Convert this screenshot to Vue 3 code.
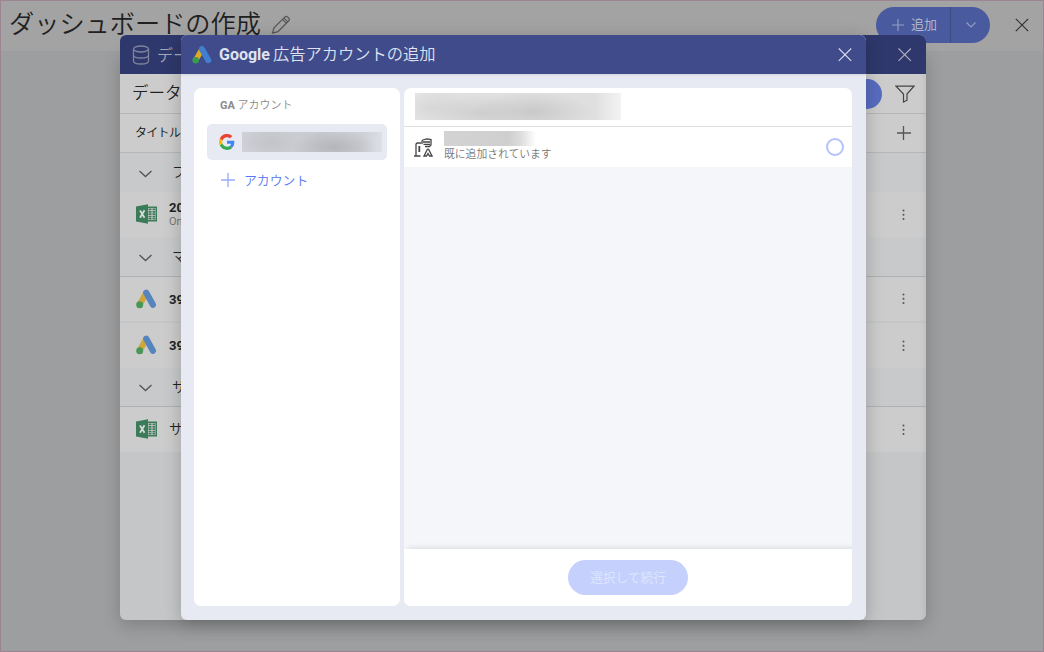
<script setup>
const rows = [
  { kind: 'group', label: 'フ', h: 39 },
  { kind: 'item', icon: 'excel', label: '20', sub: 'On', h: 45, bold: true },
  { kind: 'group', label: 'マ', h: 40, line: true },
  { kind: 'item', icon: 'ads', label: '39', h: 46, bold: true, soft: true },
  { kind: 'item', icon: 'ads', label: '39', h: 45, bold: true },
  { kind: 'group', label: 'サ', h: 39, line: true },
  { kind: 'item', icon: 'excel', label: 'サ', h: 45 },
]
</script>

<template>
  <div class="page">
    <header class="topbar">
      <h1>ダッシュボードの作成</h1>
      <svg class="pencil" width="20" height="20" viewBox="0 0 20 20"><path d="M1.500 18.200 3 12.800 13.700 2.100c1-1 2-1 3 0l.9.9c1 1 1 2 0 3L6.900 16.700 1.500 18.200ZM11.500 4.300l4 4M12.900 2.900l4 4" /></svg>
      <div class="add">
        <span class="add-main"><svg width="12" height="12" viewBox="0 0 12 12"><path d="M6 0v12M0 6h12" /></svg><span class="add-label">追加</span></span>
        <span class="add-more"><svg width="12" height="8" viewBox="0 0 12 8"><path d="m1.500 1.500 4.500 4.500 4.500-4.500" /></svg></span>
      </div>
      <svg class="page-close" width="14" height="14" viewBox="0 0 14 14"><path d="m.8.8 12.400 12.400M13.200.8.8 13.200" /></svg>
    </header>

    <section class="sources">
      <div class="sources-head">
        <svg width="18" height="20" viewBox="0 0 18 20" class="db"><ellipse cx="9" cy="4" rx="7.500" ry="3" /><path d="M1.500 4v12c0 4 15 4 15 0V4M1.500 10c0 4 15 4 15 0" /></svg>
        <span class="head-label">デー</span>
        <svg class="x" width="14" height="14" viewBox="0 0 14 14"><path d="m.5.5 12.400 12.400M12.900.5.5 12.900" /></svg>
      </div>
      <div class="bar"><span class="bar-title">データ</span><i class="pill"></i>
        <svg class="funnel" width="20" height="18" viewBox="0 0 20 18"><path d="M1 1.200h18L12 9v6.200L8.500 17V9Z" /></svg>
      </div>
      <div class="bar columns"><span class="col-title">タイトル</span>
        <svg class="plus" width="14" height="14" viewBox="0 0 14 14"><path d="M6.500 0v14M0 7h14" /></svg>
      </div>
      <div v-for="(r, i) in rows" :key="i" class="row" :class="[r.kind, { line: r.line, soft: r.soft }]" :style="{ height: r.h + 'px' }">
        <template v-if="r.kind === 'group'">
          <svg class="chev" width="14" height="8" viewBox="0 0 14 8"><path d="m1.500 1 6 5.500 6-5.500" /></svg>
          <span class="group-label">{{ r.label }}</span>
        </template>
        <template v-else>
          <svg v-if="r.icon === 'excel'" class="icon" width="21" height="20" viewBox="0 0 21 20">
            <path fill="#3c7b5a" d="M0 2.500 12 .3v19.400L0 17.500Z" /><path fill="#3c7b5a" d="M12 2.500h9v15h-9Z" />
            <path fill="#ccc" d="M12 4h7.500v12H12Z" />
            <path fill="#3c7b5a" d="M12.500 4.500h3v1.800h-3zm4 0h2.500v1.800h-2.500zm-4 2.400h3v1.800h-3zm4 0h2.500v1.800h-2.500zm-4 2.400h3v1.800h-3zm4 0h2.500v1.800h-2.500zm-4 2.400h3v1.800h-3zm4 0h2.500v1.800h-2.500zm-4 2.400h3v1.500h-3zm4 0h2.500v1.500h-2.500z" />
            <path stroke="#dcdcdc" stroke-width="1.700" fill="none" d="m4 6.500 4.500 7.200M8.500 6.300 4 13.700" />
          </svg>
          <svg v-else class="icon" width="21" height="20" viewBox="0 0 21 20">
            <path d="M10.200 4 4 15" stroke="#cda73a" stroke-width="6" stroke-linecap="round" /><path d="m10.300 3.700 6.600 12" stroke="#5684bd" stroke-width="6.200" stroke-linecap="round" /><circle cx="3.700" cy="15.700" r="3.500" fill="#499757" />
          </svg>
          <span class="names"><b v-if="r.bold">{{ r.label }}</b><span v-else class="plain">{{ r.label }}</span><small v-if="r.sub">{{ r.sub }}</small></span>
          <svg class="dots" width="3" height="12" viewBox="0 0 3 12"><circle cx="1.500" cy="1.500" r="1" /><circle cx="1.500" cy="5.700" r="1" /><circle cx="1.500" cy="10" r="1" /></svg>
        </template>
      </div>
    </section>

    <section class="dialog">
      <div class="dialog-head">
        <svg width="20" height="18" viewBox="0 0 20 18"><path d="M9.800 3.500 3.800 14" stroke="#e0aa20" stroke-width="5.500" stroke-linecap="round" /><path d="m10 3.200 6.300 11" stroke="#417fce" stroke-width="6" stroke-linecap="round" /><circle cx="3.700" cy="14.300" r="3.300" fill="#399b50" /></svg>
        <h2><b>Google</b><span>広告アカウントの追加</span></h2>
        <svg class="x" width="14" height="14" viewBox="0 0 14 14"><path d="m.8.5 12.400 12.400M13.200.5.8 12.900" /></svg>
      </div>
      <div class="dialog-body">
        <aside class="accounts">
          <div class="accounts-title"><b>GA</b> アカウント</div>
          <div class="account">
            <svg width="16" height="16" viewBox="0 0 48 48"><path fill="#4285f4" d="M46 24.500c0-1.600-.1-3.100-.4-4.500H24v9h12.400c-.6 3-2.200 5.300-4.600 6.900l7.300 5.700C43.400 37.700 46 31.800 46 24.500Z" /><path fill="#fbbc05" d="M10.500 28.600a14 14 0 0 1 0-9.200L2.600 13.200a24 24 0 0 0 0 21.600Z" /><path fill="#ea4335" d="M24 9.500c3.500 0 6.700 1.200 9.200 3.600l6.900-6.900A23.500 23.500 0 0 0 2.600 13.200l7.900 6.200C12.400 13.700 17.700 9.500 24 9.500Z" /><path fill="#34a853" d="M24 48c6.500 0 11.900-2.100 15.900-5.800l-7.700-6c-6.100 4.300-18 2.200-21.700-7.600l-7.900 6.200C6.500 42.600 14.600 48 24 48Z" /></svg>
            <i class="mask mask-account"></i>
          </div>
          <div class="new-account"><svg width="14" height="14" viewBox="0 0 14 14"><path d="M7 0v14M0 7h14" /></svg><span>アカウント</span></div>
        </aside>
        <main class="panel">
          <div class="panel-head"><i class="mask mask-title"></i></div>
          <div class="entry">
            <svg class="building" width="19" height="20" viewBox="0 0 19 20">
              <path d="M0 18h6.500M2 18V6.500c0-1 .5-1.500 1.500-1.500H7M8 6V3c0-.5.300-.8.800-1l4-1.200 4.200.7V7l-1.500 1.500H11" /><path stroke-width="1.800" d="M5.300 8v6" /><path d="M9 4h7M9.500 6.300H16M10 18l3.300-6.500c.3-.6 1.100-.6 1.400 0L18 18h-2.500L14 15.500 12.500 18Z" />
            </svg>
            <div class="entry-text"><i class="mask mask-name"></i><span>既に追加されています</span></div>
            <i class="radio"></i>
          </div>
          <div class="space"></div>
          <footer><span class="submit">選択して続行</span></footer>
        </main>
      </div>
    </section>
    <i class="frame"></i>
  </div>
</template>

<style>
body { margin: 0; overflow: hidden; }
</style>
<style scoped>
* { box-sizing: border-box; }
.page { position: relative; width: 1044px; height: 652px; overflow: hidden; background: #9d9e9f; font-family: Roboto, "Noto Sans CJK JP", sans-serif; font-weight: 350; }
svg { fill: none; flex: none; }
.frame { position: absolute; inset: 0; border: 1px solid #9c8593; }
.topbar { display: flex; height: 51px; background: #a3a3a3; padding-left: 9px; align-items: flex-start; }
h1 { margin: 0; font-size: 25.200px; line-height: 49px; font-weight: 350; color: #202020; white-space: nowrap; width: 262px; }
.pencil { margin-top: 15px; stroke: #555; stroke-width: 1.200; }
.add { display: flex; margin: 7px 0 0 585px; width: 114px; height: 36px; border-radius: 18px; background: #495a9e; color: #b9bfd1; font-size: 13px; overflow: hidden; }
.add-main { width: 75px; display: flex; align-items: center; padding-left: 16px; gap: 7px; border-right: 1px solid #3d4b84; }
.add-label { padding-bottom: 3px; }
.add-more { flex: 1; display: grid; place-items: center; }
.add svg { stroke: #939dc2; stroke-width: 1.200; }
.page-close { margin: 18px 0 0 25px; stroke: #303030; stroke-width: 1.200; }
.sources { position: absolute; left: 120px; top: 35px; width: 806px; height: 585px; background: #c5c6c8; border-radius: 6px; overflow: hidden; z-index: 1; }
.sources::after { content: ''; position: absolute; inset: 39px 0 0; box-shadow: inset -7px 0 6px -6px rgba(0, 0, 0, .08); }
.page::before { content: ''; position: absolute; left: 120px; top: 50px; width: 806px; height: 570px; border-radius: 6px; box-shadow: 0 5px 18px rgba(0, 0, 0, .2); }
.sources-head { height: 39px; background: #2f386c; display: flex; align-items: center; color: #a5a9bd; padding: 0 14px 0 12px; font-size: 16px; }
.head-label { padding-bottom: 2px; margin-left: -1px; }
.db { stroke: #7f849c; stroke-width: 1.300; margin-right: 8px; }
.x { margin-left: auto; stroke: #d5d8e7; stroke-width: 1.200; }
.sources-head .x { stroke: #a8abbd; }
.bar { height: 40px; border-bottom: 1px solid #b7b7b7; background: #ccc; display: flex; align-items: center; padding-left: 12px; }
.bar-title { font-size: 16.500px; color: #222; padding-bottom: 3px; }
.columns { height: 39px; padding: 0 15px; }
.col-title { font-size: 12px; color: #111; letter-spacing: -.7px; padding-bottom: 3px; }
.pill { width: 130px; height: 30px; border-radius: 15px; background: #586cbf; margin-left: auto; }
.funnel { margin: 0 11px 0 13px; stroke: #444; stroke-width: 1.200; }
.plus { stroke: #555; stroke-width: 1.300; margin-left: auto; }
.row { display: flex; align-items: center; padding-left: 16px; background: #ccc; }
.group { background: #c8c9cb; padding-left: 18px; }
.line { border-bottom: 1px solid #b0b1b3; }
.soft { border-bottom: 2px solid #c5c6c8; }
.icon { margin-top: -1px; }
.chev { stroke: #555; stroke-width: 1.300; margin-top: 2px; }
.group-label { font-size: 14px; margin-left: 20px; color: #222; padding-bottom: 3px; }
.names { display: flex; flex-direction: column; margin-left: 12px; color: #222; font-size: 13px; line-height: 15px; }
.names b { font-weight: 700; }
.names .plain { font-size: 14px; padding-bottom: 1px; }
.names small { font-size: 11px; line-height: 14px; color: #777; font-weight: 400; }
.dots { margin: 0 21px 0 auto; fill: #555; }
.dialog { position: absolute; left: 181px; top: 35px; width: 685px; height: 585px; background: #e7eaf2; border-radius: 6px; overflow: hidden; display: flex; flex-direction: column; z-index: 2; box-shadow: 0 4px 18px rgba(0, 0, 0, .22); }
.dialog-head { height: 39px; flex: none; background: #404b8b; box-shadow: 0 1px 2px rgba(0, 0, 0, .1); display: flex; align-items: center; padding: 0 14px 0 11px; }
h2 { display: flex; gap: 3px; margin: 0 0 0 7px; font-size: 16.250px; font-weight: 350; color: #dfe2ef; white-space: nowrap; line-height: 39px; }
h2 b { font-size: 16px; font-weight: 700; }
.dialog-body { flex: 1; display: flex; gap: 4px; padding: 14px 14px 14px 13px; }
.accounts { width: 206px; background: #fff; border-radius: 7px; }
.accounts-title { font-size: 11px; color: #8b8b8b; line-height: 36px; height: 36px; padding-left: 26px; }
.accounts-title b { font-size: 11px; font-weight: 700; }
.account { margin: 0 13px; height: 36px; border-radius: 5px; background: #e7eaf2; display: flex; align-items: center; padding-left: 12px; gap: 7px; }
.mask { display: block; }
.mask-account { width: 140px; height: 20px; background: radial-gradient(ellipse 30px 16px at 20% 50%, rgba(190, 191, 195, .7), transparent), radial-gradient(ellipse 42px 16px at 66% 75%, rgba(174, 176, 181, .8), transparent), linear-gradient(90deg, #cfd1d6, #c9cacf 55%, #cdcfd4 85%, #dcdfe7); }
.new-account { display: flex; align-items: center; gap: 9px; height: 40px; padding-left: 27px; font-size: 12.850px; color: #5675f5; }
.new-account span { padding-bottom: 2px; }
.new-account svg { stroke: #9aabf7; stroke-width: 1.300; }
.panel { flex: 1; background: #fff; border-radius: 7px; overflow: hidden; display: flex; flex-direction: column; }
.panel-head { height: 39px; border-bottom: 1px solid #dedede; padding: 5px 11px; }
.mask-title { width: 206px; height: 27px; background: radial-gradient(ellipse 60px 20px at 57% 70%, rgba(195, 195, 195, .8), transparent), radial-gradient(ellipse 45px 18px at 31% 75%, rgba(200, 200, 200, .7), transparent), radial-gradient(ellipse 40px 18px at 8% 55%, rgba(208, 208, 208, .6), transparent), linear-gradient(90deg, #e7e7e7, #e0e0e0 12%, #dfdfdf 87%, #f3f3f3); }
.entry { height: 40px; display: flex; padding-left: 10px; }
.building { margin: 11px 11px 0 0; stroke: #444; stroke-width: 1.300; }
.entry-text { padding-top: 4px; font-size: 10.800px; color: #777; line-height: 17px; }
.mask-name { width: 92px; height: 15px; background: linear-gradient(90deg, #d3d3d3, #cfcfcf 70%, #dcdcdc 83%, #fff); }
.radio { margin: 11px 8px 0 auto; width: 18px; height: 18px; border: 2px solid #b4c1fc; border-radius: 50%; }
.space { flex: 1; background: #f5f6fa; }
footer { height: 57px; background: #fff; box-shadow: 4px -2px 5px rgba(0, 0, 0, .09); display: flex; justify-content: center; padding-top: 11px; }
.submit { width: 120px; height: 35px; border-radius: 18px; background: #c5d0fd; color: #dee5fe; font-size: 12.700px; line-height: 35px; text-align: center; font-weight: 400; }
</style>
